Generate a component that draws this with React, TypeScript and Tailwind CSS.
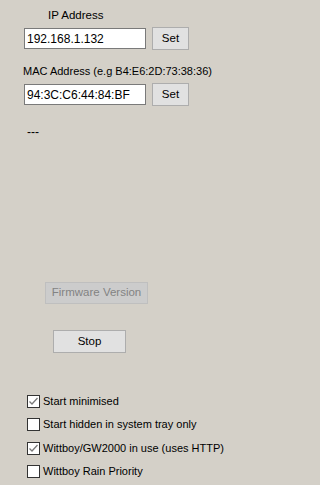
const font = { fontFamily: '"Liberation Sans", Arial, sans-serif' };

function Btn({ label, w, disabled }: { label: string; w: string; disabled?: boolean }) {
  return (
    <div
      className={`${w} flex items-center justify-center border text-[11.5px] ${
        disabled
          ? "h-[22px] bg-[#cccccc] border-[#bfbfbf] text-[#838383]"
          : "h-[23px] bg-[#e1e1e1] border-[#adadad] text-black"
      }`}
    >
      {label}
    </div>
  );
}

function Check({ label, checked }: { label: string; checked?: boolean }) {
  return (
    <div className="flex items-center h-[13px] gap-[3px]">
      <div className="w-[13px] h-[13px] border border-[#333333] bg-white flex items-center justify-center">
        {checked && (
          <svg width="11" height="11" viewBox="0 0 11 11">
            <path d="M1.5 5.5 L4 8 L9.5 2" fill="none" stroke="#7a7a7a" strokeWidth="1.3" />
          </svg>
        )}
      </div>
      <span className="text-[11px] leading-[15px] text-black whitespace-nowrap">{label}</span>
    </div>
  );
}

export default function App() {
  return (
    <div className="w-full h-[485px] bg-[#d4d0c8] overflow-hidden pt-[8px]" style={font}>
      {/* IP */}
      <div className="ml-[48px] h-[15px] leading-[15px] text-[11.5px] text-black">IP Address</div>
      <div className="ml-[24px] mt-[4px] flex items-center gap-[6px]">
        <div className="w-[122px] h-[21px] bg-white border border-[#7a7a7a] flex items-center pl-[2px] text-[12px] text-black">
          192.168.1.132
        </div>
        <Btn label="Set" w="w-[37px]" />
      </div>

      {/* MAC */}
      <div className="ml-[23px] mt-[14px] h-[15px] leading-[15px] text-[11px] text-black whitespace-nowrap">
        MAC Address (e.g B4:E6:2D:73:38:36)
      </div>
      <div className="ml-[24px] mt-[4px] flex items-center gap-[6px]">
        <div className="w-[122px] h-[21px] bg-white border border-[#7a7a7a] flex items-center pl-[2px] text-[12px] text-black">
          94:3C:C6:44:84:BF
        </div>
        <Btn label="Set" w="w-[37px]" />
      </div>

      <div className="ml-[27px] mt-[19px] h-[15px] leading-[15px] text-[12px] text-black">---</div>

      <div className="ml-[45px] mt-[142px]">
        <Btn label="Firmware Version" w="w-[103px]" disabled />
      </div>
      <div className="ml-[53px] mt-[26px]">
        <Btn label="Stop" w="w-[73px]" />
      </div>

      <div className="ml-[27px] mt-[42px] flex flex-col gap-[10.33px]">
        <Check label="Start minimised" checked />
        <Check label="Start hidden in system tray only" />
        <Check label="Wittboy/GW2000 in use (uses HTTP)" checked />
        <Check label="Wittboy Rain Priority" />
      </div>
    </div>
  );
}
